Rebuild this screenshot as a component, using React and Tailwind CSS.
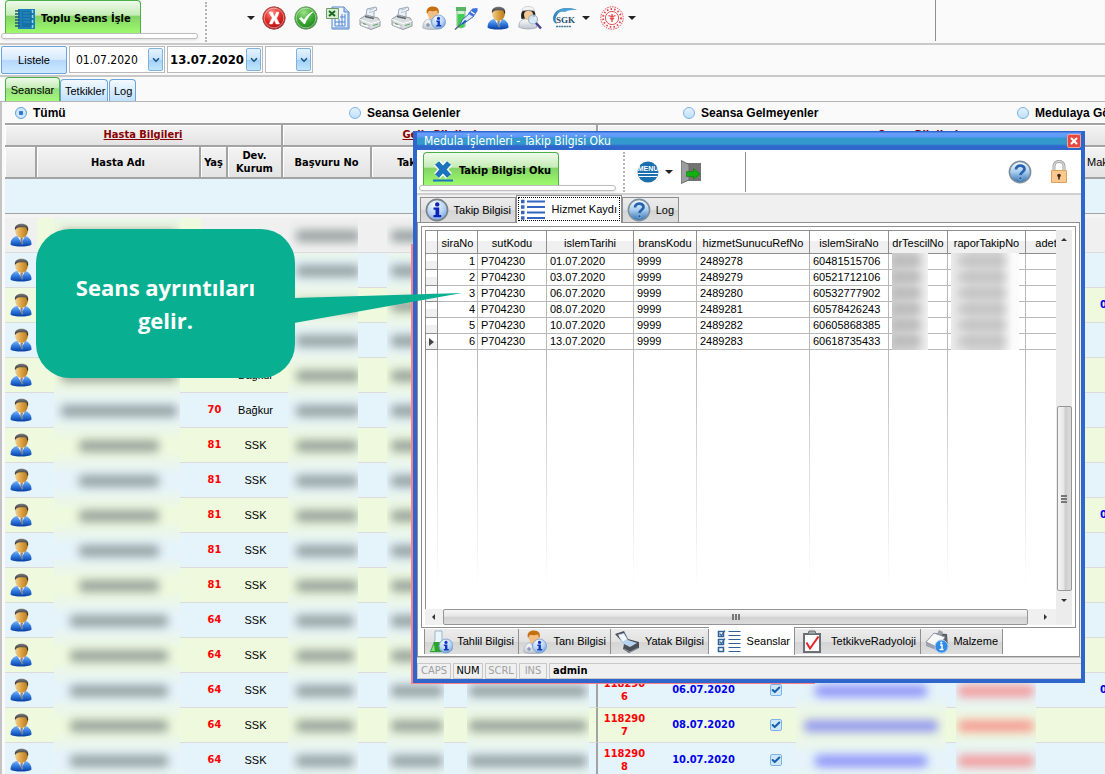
import { Check, ChevronDown, X } from 'lucide-react'
import clsx from 'clsx'

const TAHOMA = "font-['DejaVu_Sans_Condensed','DejaVu_Sans',sans-serif]"
const SANS = "font-['Liberation_Sans',Arial,sans-serif]"

const FILTERS = ['Tümü', 'Seansa Gelenler', 'Seansa Gelmeyenler', 'Medulaya Gönderilenler']

// dev: institution, name/no: widths of the masked values
const PATIENTS = [
  { name: 116, no: 64, first: true },
  { name: 116, no: 64 },
  { name: 116, no: 64, date: '0' },
  { name: 116, no: 64 },
  { age: 70, dev: 'Bağkur', name: 116, no: 64 },
  { age: 70, dev: 'Bağkur', name: 116, no: 64 },
  { age: 81, dev: 'SSK', name: 80, no: 62 },
  { age: 81, dev: 'SSK', name: 80, no: 62 },
  { age: 81, dev: 'SSK', name: 80, no: 62, date: '0' },
  { age: 81, dev: 'SSK', name: 80, no: 62 },
  { age: 81, dev: 'SSK', name: 80, no: 62 },
  { age: 64, dev: 'SSK', name: 98, no: 58 },
  { age: 64, dev: 'SSK', name: 98, no: 58 },
  { age: 64, dev: 'SSK', name: 98, no: 58, seans: '1182906', tarih: '06.07.2020', doctor: 112, date: '0' },
  { age: 64, dev: 'SSK', name: 98, no: 58, seans: '1182907', tarih: '08.07.2020', doctor: 134 },
  { age: 64, dev: 'SSK', name: 98, no: 58, seans: '1182908', tarih: '10.07.2020', doctor: 112 },
]

const SERVICE_COLUMNS = ['siraNo', 'sutKodu', 'islemTarihi', 'bransKodu', 'hizmetSunucuRefNo', 'islemSiraNo', 'drTescilNo', 'raporTakipNo', 'adet']

const SERVICES = [
  ['1', 'P704230', '01.07.2020', '9999', '2489278', '60481515706'],
  ['2', 'P704230', '03.07.2020', '9999', '2489279', '60521712106'],
  ['3', 'P704230', '06.07.2020', '9999', '2489280', '60532777902'],
  ['4', 'P704230', '08.07.2020', '9999', '2489281', '60578426243'],
  ['5', 'P704230', '10.07.2020', '9999', '2489282', '60605868385'],
  ['6', 'P704230', '13.07.2020', '9999', '2489283', '60618735433'],
]

/* ---------- icons ---------- */

function Gradients() {
  return (
    <svg width="0" height="0" className="absolute" aria-hidden="true">
      <defs>
        <linearGradient id="suit" x1="0" y1="0" x2="0" y2="1">
          <stop offset="0" stopColor="#7db4f5" />
          <stop offset=".5" stopColor="#2f78dd" />
          <stop offset=".9" stopColor="#0f48ac" />
        </linearGradient>
        <linearGradient id="skin" x1="0" y1="0" x2="1" y2="0">
          <stop offset="0" stopColor="#f0d29a" />
          <stop offset=".5" stopColor="#dca040" />
          <stop offset="1" stopColor="#b27a1e" />
        </linearGradient>
        <linearGradient id="hair" x1="0" y1="0" x2="0" y2="1">
          <stop offset="0" stopColor="#7d7d7d" />
          <stop offset="1" stopColor="#1c1c1c" />
        </linearGradient>
        <linearGradient id="coat" x1="0" y1="0" x2="0" y2="1">
          <stop offset="0" stopColor="#ffffff" />
          <stop offset="1" stopColor="#bcc3ce" />
        </linearGradient>
        <radialGradient id="redBall" cx=".4" cy=".25" r=".8">
          <stop offset="0" stopColor="#ff8d85" />
          <stop offset=".5" stopColor="#e22a26" />
          <stop offset="1" stopColor="#a90c0c" />
        </radialGradient>
        <radialGradient id="greenBall" cx=".4" cy=".25" r=".8">
          <stop offset="0" stopColor="#9fe08c" />
          <stop offset=".5" stopColor="#3fae35" />
          <stop offset="1" stopColor="#1e7d1c" />
        </radialGradient>
        <radialGradient id="infoBall" cx=".4" cy=".25" r=".8">
          <stop offset="0" stopColor="#f4faff" />
          <stop offset=".6" stopColor="#b3d2f3" />
          <stop offset="1" stopColor="#6d9fd8" />
        </radialGradient>
        <linearGradient id="helpBall" x1="0" y1="0" x2="0" y2="1">
          <stop offset="0" stopColor="#ffffff" />
          <stop offset=".5" stopColor="#a9cdec" />
          <stop offset="1" stopColor="#2f6fb2" />
        </linearGradient>
      </defs>
    </svg>
  )
}

function PersonIcon({ className = 'size-6' }) {
  return (
    <svg viewBox="0 0 24 24" className={className}>
      <path d="M1.500 21.500c0-4.500 2-7 6-8.500h9c4 1.500 6 4 6 8.500-3 2.700-18 2.700-21 0z" fill="url(#suit)" />
      <path d="M8.500 13l4 7 3.500-7-3.500-1z" fill="#fff" />
      <path d="M11.500 15.200l1-1 1.500 1-.5 1.500.8 4-1.500 1-1.500-4z" fill="#7d8496" />
      <path d="M6 6.500c0-6.500 13-6.500 13 0 0 4.500-2.700 8.500-6.500 8.500S6 11 6 6.500z" fill="url(#skin)" />
      <path d="M6 7C5.200 3 8 .7 12.500.7s7.700 2.300 6.500 7.300c-1-.8-1.300-2-1.500-3.200-2.500-.6-6-.6-9 0C7.200 5.500 6.800 6 6 7z" fill="url(#hair)" />
    </svg>
  )
}

function InfoBadge({ x = 16.500, y = 16, r = 7 }) {
  return (
    <g>
      <circle cx={x} cy={y} r={r} fill="url(#infoBall)" stroke="#7c9cc4" strokeWidth=".8" />
      <circle cx={x} cy={y - 3.600} r="1.600" fill="#1236c0" />
      <path d={`M${x - 2.200} ${y - 1.400}h3.600v4.500h1.300v1.500h-4.900v-1.500h1.200v-3h-1.200z`} fill="#1236c0" />
    </g>
  )
}

function DoctorInfoIcon() {
  return (
    <svg viewBox="0 0 24 24" className="size-6">
      <path d="M.8 22c0-5 1.500-8 6-9h7c4 1 5 4 5 9-4 2-14 2-18 0z" fill="url(#coat)" stroke="#9aa3b0" strokeWidth=".6" />
      <path d="M7 13l3.500 6 3-6-3-1.500z" fill="#9ec4ef" />
      <path d="M6 17v4M4 19h4" stroke="#6f87a8" />
      <path d="M5.500 6c0-5 10.500-5 10.500 0 0 4.500-2 8-5.200 8S5.500 10.500 5.500 6z" fill="#f0bf86" />
      <path d="M5 8C3.500 3 6.500.5 11 .5S18 3.500 16.500 8c-1-1-1-2-1.500-3.500-3 1-6 .5-8 .5-1 1-1 2-2 3z" fill="#c4700f" />
      <InfoBadge />
    </svg>
  )
}

function BallIcon({ kind }) {
  return (
    <svg viewBox="0 0 24 24" className="size-6">
      <circle cx="12" cy="12" r="11.200" fill={kind === 'ok' ? 'url(#greenBall)' : 'url(#redBall)'} stroke={kind === 'ok' ? '#6f9c6a' : '#9b4a48'} />
      <circle cx="12" cy="12" r="9.800" fill="none" stroke="#fff" strokeOpacity=".45" />
      {kind === 'ok' ? (
        <path d="M5.500 12.500l5 5.500c2-5 4.500-8.500 8-12-4 2-6.500 5-8.500 8.500l-2.500-3z" fill="#fff" stroke="#fff" strokeWidth="1" />
      ) : (
        <path d="M7 6h3.500c.5 2 1.500 3.500 2.200 4.500.6-1.500 1.300-3 1.800-4.500h2.500c-.5 2.500-1.500 4.500-2.500 6.300 1 1.700 2 3.500 3 5.700h-3.500c-.4-1.400-1-2.600-1.700-3.700-.8 1.200-1.500 2.400-2 3.700H7.500c.5-2.300 1.600-4.400 2.800-6.200C9 10 7.800 8.200 7 6z" fill="#fff" stroke="#fff" strokeWidth=".5" />
      )}
    </svg>
  )
}

function ExcelIcon() {
  return (
    <svg viewBox="0 0 24 24" className="size-6">
      <path d="M6 1h12l5 5v17H6z" fill="#eef5ff" stroke="#5484c4" />
      <path d="M22 7v15H7" fill="none" stroke="#7fa8e0" strokeWidth="1.500" />
      <path d="M9 13v7h10V8M9 16h10M13 13v7M16 8v12M14 11h5" fill="none" stroke="#4f83cf" />
      <path d="M18 1v5h5" fill="#bdd5f3" stroke="#5484c4" />
      <path d="M.5 2.500h12v10H.5z" fill="#d9ecd3" stroke="#6f9b67" />
      <path d="M3 5l6 5M9 5l-6 5" stroke="#136a20" strokeWidth="2" />
    </svg>
  )
}

function PrinterIcon() {
  return (
    <svg viewBox="0 0 24 24" className="size-6">
      <path d="M8 10l1-7 9-2 1 3-3 1v6z" fill="#eaf0f8" stroke="#9aa8ba" />
      <path d="M11 4l5-1.500M11 6.500l4-1" stroke="#b7c3d2" />
      <path d="M2 13l6-4 12 3 2 3v5l-9 3.500L2 19z" fill="#d9dce0" stroke="#9298a0" />
      <path d="M7 10.500l9 2" stroke="#5e646c" strokeWidth="1.500" />
      <path d="M2 13.500l11 4 9-2.500" fill="none" stroke="#fff" />
      <path d="M3 16.500l8 3v2.800L2.500 19.500z" fill="#f7f8f9" stroke="#a5abb2" strokeWidth=".7" />
      <path d="M5 17.500l3 1M15 19.500l5-1.500" stroke="#5cae58" strokeWidth="1.200" />
    </svg>
  )
}

function TubeIcon() {
  return (
    <svg viewBox="0 0 24 24" className="size-6">
      <path d="M3 3.500h8v17q-4 3-8 0z" fill="#cdf3d0" stroke="#8cb88e" />
      <path d="M3.500 8h7v12.500q-3.500 2.500-7 0z" fill="#3fd052" />
      <path d="M2 1h10v4H2z" fill="#58b666" />
      <path d="M1 23.500l5-4.500" stroke="#5d6470" strokeWidth="1.500" />
      <path d="M6 19l2-5 8-7 3.500 3.500-9 6.500z" fill="#dceafa" stroke="#3a6db8" />
      <path d="M14 7.500l4.500-5L23.500 2v3l-4 6z" fill="#3b73dc" />
      <path d="M17 5.500l3.500 2.500" stroke="#fff" strokeWidth="1.500" />
      <path d="M7 18l4-4 2 1-4 3z" fill="#2456b8" />
    </svg>
  )
}

function SearchPersonIcon() {
  return (
    <svg viewBox="0 0 24 24" className="size-6">
      <path d="M.8 21c0-4.500 1.500-7 6-8h7c4 1 5 4 5 8.500-4 2-14 2-18-.5z" fill="url(#coat)" stroke="#8a93a0" strokeWidth=".6" />
      <path d="M3.500 13C2.500 8 3 3 10 3s8 4 7 8z" fill="#222" />
      <path d="M6 8c0-4.500 9-4.500 9 0 0 3.500-1.500 6-4.500 6S6 11.500 6 8z" fill="#f3c894" />
      <path d="M4 5c0-3.500 3-4.500 6-4.500s6.500 1 6.500 4.500C14 4 7 4 4 5z" fill="#f5f5f7" stroke="#b4b9c2" strokeWidth=".6" />
      <circle cx="15" cy="13.500" r="4.500" fill="#d3e8fa" fillOpacity=".8" stroke="#a3b5c6" strokeWidth="1.200" />
      <path d="M18 17l5 5.500" stroke="#4a448c" strokeWidth="2.600" />
    </svg>
  )
}

function SgkIcon() {
  return (
    <svg viewBox="0 0 26 24" className="h-6 w-[26px]">
      <path d="M1 12C2 4 11-1 25 4 15 2 7 4 4 11c-1 3 0 5 1 7-3-1-4-3-4-6z" fill="#2f83bb" />
      <path d="M3 9C7 2 16 0 25 4c-5 0-9 0-12 2C9 5 6 6 3 9z" fill="#4ea0d0" />
      <text x="4" y="17" fontSize="9" fontWeight="bold" fontFamily="Liberation Serif, serif" fill="#27506f">SGK</text>
      <path d="M4 20.500h15" stroke="#4c7792" strokeWidth="1.500" strokeDasharray="2 .6" />
    </svg>
  )
}

function SealIcon() {
  return (
    <svg viewBox="0 0 24 24" className="size-6" fill="none" stroke="#e0434a">
      <circle cx="12" cy="12" r="11.200" strokeWidth="1" strokeDasharray="1.500 1" />
      <circle cx="12" cy="12" r="9" strokeWidth="1.800" strokeDasharray="1.500 2.200" />
      <circle cx="12" cy="12" r="6.600" strokeWidth=".9" />
      <path d="M12 8v8M8.500 9.500q3.500 2 7 0M10 12q2 2 4 0" strokeWidth="1.300" />
    </svg>
  )
}

function NotebookIcon() {
  return (
    <svg viewBox="0 0 22 22" className="size-[22px]">
      <path d="M4 1h17v20H4z" fill="#1b80b8" />
      <path d="M8 3h10v16H8z" fill="#1470a5" />
      <path d="M18.500 2v18" stroke="#9fd6f2" strokeDasharray="3 2" strokeWidth="1.500" />
      <path d="M1 3h5M1 6h5M1 9h5M1 12h5M1 15h5M1 18h5" stroke="#24587a" strokeWidth="1.300" />
      <path d="M9 5h7M9 8h7M9 11h7M9 14h7" stroke="#3b9bd0" strokeWidth=".8" />
    </svg>
  )
}

function CancelIcon() {
  return (
    <svg viewBox="0 0 22 22" className="size-[22px]">
      <path d="M5 3l12 13M17 3L5 16" stroke="#fff" strokeWidth="8" />
      <path d="M5 3l12 13M17 3L5 16" stroke="#1b74bd" strokeWidth="5.500" />
      <path d="M1 20.500h20" stroke="#1b74bd" strokeWidth="2" />
    </svg>
  )
}

function MenuIcon() {
  return (
    <svg viewBox="0 0 22 22" className="size-[22px]">
      <circle cx="11" cy="11" r="10.500" fill="#1c6fae" />
      <text x="11" y="10" textAnchor="middle" fontSize="7" fontWeight="bold" fontFamily="Liberation Sans, sans-serif" fill="#fff">MENÜ</text>
      <path d="M1 12.500h20M2 15.500h18" stroke="#fff" strokeWidth="1.200" />
    </svg>
  )
}

function DoorIcon() {
  return (
    <svg viewBox="0 0 20 24" className="h-6 w-5">
      <path d="M0 3h20v18H0z" fill="#737373" />
      <path d="M0 .5l8 4V20l-8 3.500z" fill="#9b9ea0" stroke="#6a6a6a" />
      <path d="M5.500 11.500h7V8.500l6.500 5.500-6.500 5.500v-3h-7z" fill="#12b00f" stroke="#0d7d0b" strokeWidth=".6" />
    </svg>
  )
}

function LockIcon() {
  return (
    <svg viewBox="0 0 18 24" className="h-6 w-[18px]">
      <path d="M4 11V6c0-6 10-6 10 0v5" fill="none" stroke="#a5a5a5" strokeWidth="3" />
      <path d="M4 11V6c0-6 10-6 10 0v5" fill="none" stroke="#e8e8e8" />
      <path d="M1.500 10.500h15v12h-15z" fill="#fbc88e" stroke="#dba262" />
      <circle cx="9" cy="15.500" r="1.800" fill="#3a2a18" />
      <path d="M8.200 16h1.600v3.500H8.200z" fill="#3a2a18" />
    </svg>
  )
}

function InfoIcon() {
  return (
    <svg viewBox="0 0 24 24" className="size-6">
      <circle cx="12" cy="12" r="10.600" fill="url(#infoBall)" stroke="#7c7f84" strokeWidth="1.600" />
      <circle cx="12.200" cy="6.400" r="2.200" fill="#0f23b8" />
      <path d="M8.500 9.500h5.700v7.500h2v2.200H8.500V17h2v-5.300h-2z" fill="#0f23b8" />
    </svg>
  )
}

function HelpIcon() {
  return (
    <svg viewBox="0 0 24 24" className="size-6">
      <circle cx="12" cy="12" r="10.600" fill="url(#helpBall)" stroke="#7c8f9f" strokeWidth="1.600" />
      <path d="M8 9.500C8 4.500 16.500 4.500 16.500 9c0 3-4 3-4 6" fill="none" stroke="#2763b0" strokeWidth="2.800" />
      <circle cx="12.400" cy="18.300" r="1.700" fill="#2763b0" stroke="#cfe0f0" strokeWidth=".5" />
    </svg>
  )
}

function ListIcon() {
  return (
    <svg viewBox="0 0 24 22" className="h-[22px] w-6">
      <path d="M6 2.500h18M6 8h18M6 13.500h18M6 19h18" stroke="#3565c0" strokeWidth="2" />
      <path d="M0 2.500h3.500M0 8h3.500M0 13.500h3.500M0 19h3.500" stroke="#3565c0" strokeWidth="3.500" />
    </svg>
  )
}

function ChecklistIcon() {
  return (
    <svg viewBox="0 0 24 24" className="size-6" fill="none" stroke="#2f6296">
      <path d="M1.500 2.500h5v5h-5zM1.500 10.500h5v5h-5zM1.500 18.500h5v4h-5z" strokeWidth="1.500" />
      <path d="M2.500 4.500l2 2L8 1.500M2.500 12.500l2 2L8 9.500" strokeWidth="1.200" />
      <path d="M11.500 2.500h12M11.500 6.500h12M11.500 10.500h12M11.500 14.500h12M11.500 18.500h12M11.500 22.500h12" strokeWidth="1.200" />
    </svg>
  )
}

function FlaskIcon() {
  return (
    <svg viewBox="0 0 24 24" className="size-6">
      <path d="M6 1h7v9l6 12H1L6 10z" fill="#e9f6fb" stroke="#9db7c6" />
      <path d="M5 12h9l5 10H1z" fill="#2ba12f" />
      <path d="M5 14l-3 7h4z" fill="#8be07e" />
      <InfoBadge x={17} />
    </svg>
  )
}

function BedIcon() {
  return (
    <svg viewBox="0 0 24 22" className="h-[22px] w-6">
      <path d="M0 3l9-3 4 8 11 3v6l-10 5-6-4 1-5z" fill="#4b4f58" />
      <path d="M3 3.500L9 2l4 7 9 3-7 4-8-4z" fill="#b7d3ee" />
      <path d="M3.500 4.500L8.500 3l3.500 5-4 2.500z" fill="#f5faff" />
      <path d="M9 18l6 3 8-4" fill="none" stroke="#9297a0" />
    </svg>
  )
}

function ClipboardIcon() {
  return (
    <svg viewBox="0 0 20 24" className="h-6 w-5">
      <path d="M1 3h18v20H1z" fill="#6b7077" />
      <path d="M3 5h14v16H3z" fill="#fdfdfd" />
      <path d="M6 4l1-3h6l1 3z" fill="#a8adb3" stroke="#686d73" />
      <path d="M4.500 12.500l3.500 6 8.500-12" fill="none" stroke="#e32626" strokeWidth="2" />
    </svg>
  )
}

function SuppliesIcon() {
  return (
    <svg viewBox="0 0 24 24" className="size-6">
      <path d="M9 3l13 1 1 13-12 4z" fill="#5b6068" />
      <path d="M14 0l4 2-2 4-4-2z" fill="#9aa0a8" />
      <path d="M9 3l11 4-6 11L1 12z" fill="#f7f8fa" stroke="#8f959d" />
      <path d="M1 12l13 6v3L1 16z" fill="#9aa3ae" />
      <circle cx="16.500" cy="16.500" r="6.500" fill="#2f8be6" stroke="#a9cdf2" />
      <path d="M15 15h2v4.500M14.500 19.500h4" stroke="#fff" strokeWidth="1.500" fill="none" />
      <circle cx="16.300" cy="12.700" r="1.100" fill="#fff" />
    </svg>
  )
}

/* ---------- small parts ---------- */

function Caret() {
  return (
    <svg viewBox="0 0 8 4" className="h-1 w-2 shrink-0">
      <path d="M0 0h8L4 4z" fill="#222" />
    </svg>
  )
}

function DottedBar() {
  return <div className="h-10 w-0 shrink-0 border-l-2 border-dotted border-[#b4b4b4]" />
}

function MainButton({ icon, children }) {
  return (
    <div className="w-[200px] shrink-0">
      <button
        className={clsx(
          'ml-1 flex h-[33px] w-[136px] items-center gap-[5px] rounded-t-sm border border-b-0 border-[#4bb04b] bg-[linear-gradient(#f0faec,#c4ecb4_45%,#83d266_46%,#9dfb6c)] pt-1 pl-2 text-[11px] font-bold whitespace-nowrap',
          TAHOMA,
        )}
      >
        {icon}
        {children}
      </button>
      <div className="h-[6px] w-[197px] rounded-full border border-[#bdbdbd] bg-white shadow-sm" />
    </div>
  )
}

function ComboBox({ label, value, bold, className }) {
  return (
    <div className={clsx('flex h-[27px] items-center border border-[#b9b9b9] bg-white pr-px', className)}>
      <input
        aria-label={label}
        defaultValue={value}
        className={clsx('min-w-0 flex-1 outline-none', TAHOMA, bold ? 'pl-0.5 text-[13px] font-bold' : 'pl-1.5 text-[12px]')}
      />
      <button
        aria-label={label}
        className="flex h-[23px] w-[15px] shrink-0 items-center justify-center rounded-xs border border-[#7fb2dd] bg-[linear-gradient(#e6f3fe,#c5e2fb_50%,#a0d0f8_51%,#c3e6ff)]"
      >
        <ChevronDown className="size-2.5 stroke-[#1d5583] stroke-[4]" />
      </button>
    </div>
  )
}

function Smudge({ tone, width, color = 'bg-[#7e8a88]', className, align = 'mx-auto' }) {
  return (
    <div
      className={clsx(
        '-mb-px flex h-[35px] items-center overflow-hidden',
        tone === 'blue' && 'bg-[linear-gradient(#eaf6ec,#e5f3fa_35%,#e5f3fa_65%,#eaf6ec)]',
        tone === 'green' && 'bg-[linear-gradient(#eaf6ec,#eff9de_35%,#eff9de_65%,#eaf6ec)]',
        className,
      )}
    >
      <div className={clsx('h-3 shrink-0 rounded-sm opacity-75 blur-[5px]', color, align)} style={{ width }} />
    </div>
  )
}

/* ---------- main screen ---------- */

function Toolbar() {
  return (
    <div className="flex h-[43px] shrink-0 items-start">
      <div className="flex h-[41px] w-[936px] shrink-0 border-r border-[#8f8f8f] pl-px">
        <MainButton icon={<NotebookIcon />}>Toplu Seans İşle</MainButton>
        <div className="ml-1 pt-0.5">
          <DottedBar />
        </div>
        <div className="ml-10 flex h-9 items-center gap-2">
          <button className="-mr-px" aria-label="Seçenekler"><Caret /></button>
          <button aria-label="İptal"><BallIcon kind="cancel" /></button>
          <button aria-label="Onayla"><BallIcon kind="ok" /></button>
          <button aria-label="Excel"><ExcelIcon /></button>
          <button aria-label="Yazdır"><PrinterIcon /></button>
          <button aria-label="Liste yazdır"><PrinterIcon /></button>
          <button aria-label="Hasta bilgisi"><DoctorInfoIcon /></button>
          <button aria-label="Tetkik"><TubeIcon /></button>
          <button aria-label="Hasta"><PersonIcon /></button>
          <button aria-label="Hasta ara"><SearchPersonIcon /></button>
          <button aria-label="SGK" className="ml-0.5 flex items-center gap-1"><SgkIcon /><Caret /></button>
          <button aria-label="Bakanlık" className="ml-0.5 flex items-center gap-1"><SealIcon /><Caret /></button>
        </div>
      </div>
    </div>
  )
}

function QueryBar() {
  return (
    <div className="flex h-[34px] shrink-0 items-start gap-0.5 border-y-2 border-[#c9c9c9] pt-px pl-px">
      <button className={clsx('h-7 w-[66px] rounded-xs border border-[#6ba4dc] bg-[linear-gradient(#f3f9ff,#d6eafd_48%,#b4d8fb_50%,#cde9ff)] text-[11px]', SANS)}>
        Listele
      </button>
      <ComboBox label="Başlangıç" value="01.07.2020" className="w-24" />
      <ComboBox label="Bitiş" value="13.07.2020" bold className="w-24" />
      <ComboBox label="Seçim" value="" className="w-12" />
    </div>
  )
}

function ScreenTabs() {
  const tab = 'rounded-t-sm border border-b-0 px-1 pt-0.5 text-[11px]'
  return (
    <div className={clsx('flex h-[25px] shrink-0 items-end border-b border-[#b5b5b5] pl-[5px]', SANS)} role="tablist">
      <button role="tab" className={clsx(tab, 'h-6 w-[55px] border-[#4bb04b] bg-[linear-gradient(#eefae8,#c4ecb4_45%,#97dc80_46%,#a5f97b)]')}>Seanslar</button>
      <button role="tab" className={clsx(tab, 'h-[22px] w-12 border-[#6ba4dc] bg-linear-to-b from-[#f3f9ff] to-[#bfe1fb] px-0.5 whitespace-nowrap')}>Tetkikler</button>
      <button role="tab" className={clsx(tab, 'ml-px h-[22px] w-[27px] border-[#6ba4dc] bg-linear-to-b from-[#f3f9ff] to-[#bfe1fb]')}>Log</button>
    </div>
  )
}

function FilterRow() {
  return (
    <div className={clsx('grid h-[21px] shrink-0 grid-cols-[repeat(4,334px)] items-center pl-[13px] text-[12px] font-bold', SANS)}>
      {FILTERS.map((name, i) => (
        <label key={name} className="flex items-center gap-1.5">
          <input
            type="radio"
            name="filter"
            defaultChecked={i === 0}
            className="size-3 appearance-none rounded-full border border-[#7db3e6] bg-linear-to-b from-[#e4f1fd] to-[#bfe0fb] checked:border-[#5c9fe0] checked:bg-[radial-gradient(#2d77cc_28%,#cfe7fc_36%)]"
          />
          {name}
        </label>
      ))}
    </div>
  )
}

function PatientTable() {
  const head = 'border-r-2 border-b-2 border-[#a3a3a3] bg-linear-to-b from-[#f4f4f4] to-[#e3e3e3] p-0 shadow-[inset_1px_1px_0_#fff]'
  const group = clsx(head, 'h-[22px] text-[11px] text-[#8b0000] underline')
  return (
    <table className={clsx('ml-[5px] w-[1235px] table-fixed border-separate border-spacing-0 border-t-2 border-[#a3a3a3] text-center text-[11px]', TAHOMA)}>
      <colgroup>
        <col className="w-8" />
        <col className="w-[164px]" />
        <col className="w-[27px]" />
        <col className="w-[55px]" />
        <col className="w-[89px]" />
        <col className="w-[92px]" />
        <col className="w-[134px]" />
        <col className="w-[53px]" />
        <col className="w-[105px]" />
        <col className="w-10" />
        <col className="w-[150px]" />
        <col className="w-[100px]" />
        <col className="w-[38px]" />
        <col />
      </colgroup>
      <thead>
        <tr>
          <th colSpan={4} className={group}>Hasta Bilgileri</th>
          <th colSpan={3} className={group}>Geliş Bilgileri</th>
          <th colSpan={7} className={group}>Seans Bilgileri</th>
        </tr>
        <tr className="h-8 leading-[13px]">
          <th className={head} />
          <th className={head}>Hasta Adı</th>
          <th className={head}>Yaş</th>
          <th className={head}>Dev. Kurum</th>
          <th className={head}>Başvuru No</th>
          <th className={clsx(head, 'pl-2')}>Takip No</th>
          <th className={head} />
          <th className={head} />
          <th className={head} />
          <th className={head} />
          <th className={head} />
          <th className={head} />
          <th className={head} />
          <th className={clsx(head, SANS, 'pl-[3px] text-left font-normal')}>Makbuz</th>
        </tr>
      </thead>
      <tbody>
        <tr className="h-[35px] bg-[#e5f3fa]">
          <td colSpan={14} className="border-b border-[#a3a3a3] p-0" />
        </tr>
        <tr className="h-1 bg-[#f4f4f4]">
          <td colSpan={14} className="p-0" />
        </tr>
        {PATIENTS.map((p, i) => {
          const tone = i === 0 ? 'gray' : i % 2 ? 'blue' : 'green'
          const cell = 'h-[35px] border-b border-[#dcdcdc] p-0'
          return (
            <tr key={i} className={clsx(tone === 'gray' && 'bg-[#f0f0f0]', tone === 'blue' && 'bg-[#e5f3fa]', tone === 'green' && 'bg-[#eff9de]')}>
              <td className={cell}><PersonIcon className="ml-1 size-6" /></td>
              <td className={clsx(cell, p.first && 'bg-[#eff9de]')}><Smudge tone={p.first ? 'green' : tone} width={p.name} className="ml-[17px] w-[126px] pl-1" /></td>
              <td className={clsx(cell, 'font-bold text-[#f00]')}>{p.age}</td>
              <td className={clsx(cell, SANS)}>{p.dev}</td>
              <td className={cell}><Smudge tone={tone} width={p.no} align="ml-2" className="ml-[5px] w-[70px]" /></td>
              <td className={cell}><Smudge tone={tone} width={52} align="ml-1" className="ml-[15px] w-[57px]" /></td>
              <td className={clsx(cell, 'border-r-2 border-r-[#a3a3a3]')}><Smudge tone={tone} width={118} className="ml-[3px] w-[122px]" /></td>
              <td className={clsx(cell, 'px-1 leading-[13px] font-bold break-all text-[#f00]')}>{p.seans}</td>
              <td className={clsx(cell, 'font-bold text-[#0000f0]')}>{p.tarih}</td>
              <td className={cell}>
                {p.tarih && (
                  <label className="mx-auto grid size-3 place-items-center">
                    <input type="checkbox" defaultChecked aria-label={p.tarih} className="col-start-1 row-start-1 size-3 appearance-none rounded-xs border border-[#7db3e6] bg-[#cfe7fc]" />
                    <Check className="pointer-events-none col-start-1 row-start-1 size-2.5 stroke-[#1862ad] stroke-[5]" />
                  </label>
                )}
              </td>
              <td className={cell}>{p.doctor && <Smudge tone={tone} width={p.doctor} color="bg-[#7479f8]" />}</td>
              <td className={cell}>{p.doctor && <Smudge tone={tone} width={76} color="bg-[#f7807c]" className="ml-[10px] w-20" />}</td>
              <td className={cell} />
              <td className={clsx(cell, 'pl-4 text-left font-bold text-[#0000f0]')}>{p.date}</td>
            </tr>
          )
        })}
      </tbody>
    </table>
  )
}

/* ---------- "Takip Bilgisi Oku" window ---------- */

function WindowToolbar() {
  return (
    <div className="flex h-[45px] shrink-0 items-start border-b-2 border-[#d0d0d0] bg-white pt-0.5 pl-0.5">
      <MainButton icon={<CancelIcon />}>Takip Bilgisi Oku</MainButton>
      <div className="ml-1"><DottedBar /></div>
      <div className="ml-3 flex h-10 w-[109px] items-center gap-2 border-r border-[#8f8f8f]">
        <button aria-label="Menü" className="flex items-center gap-1.5"><MenuIcon /><Caret /></button>
        <button aria-label="Çıkış"><DoorIcon /></button>
      </div>
      <div className="ml-auto flex h-10 items-center gap-[18px] pr-[13px]">
        <button aria-label="Yardım"><HelpIcon /></button>
        <button aria-label="Kilitle"><LockIcon /></button>
      </div>
    </div>
  )
}

function WindowTab({ icon, active, bottom, className, children }) {
  return (
    <button
      role="tab"
      aria-selected={Boolean(active)}
      className={clsx(
        'flex items-center justify-between border-[#8f8f8f] pr-1 pl-1 whitespace-nowrap',
        bottom ? 'border-r' : 'border border-b-0',
        active ? 'bg-white' : 'bg-[linear-gradient(#ececec,#e2e2e2_50%,#d4d4d4_51%,#dedede)]',
        className,
      )}
    >
      {icon}
      {children}
    </button>
  )
}

function ServiceTable() {
  const head = 'h-[23px] border-r border-b border-[#8f8f8f] bg-[linear-gradient(#fff_45%,#f0f0f0_46%)] p-0 pt-0.5 font-normal'
  const cell = 'h-4 border-r border-b border-[#b9b9b9] py-0 pr-0.5 pl-[3px] leading-[15px]'
  const fade = 'h-[238px] bg-[linear-gradient(#b9b9b9,#fff)] bg-[length:1px_100%] bg-right bg-no-repeat p-0'
  return (
    <table className="w-[641px] shrink-0 table-fixed border-separate border-spacing-0 text-left">
      <colgroup>
        <col className="w-3" />
        <col className="w-10" />
        <col className="w-[69px]" />
        <col className="w-[87px]" />
        <col className="w-[63px]" />
        <col className="w-[113px]" />
        <col className="w-[79px]" />
        <col className="w-[59px]" />
        <col className="w-[78px]" />
        <col />
      </colgroup>
      <thead>
        <tr>
          <th className={head} />
          {SERVICE_COLUMNS.map((c) => (
            <th key={c} className={clsx(head, 'text-center')}>{c}</th>
          ))}
        </tr>
      </thead>
      <tbody>
        {SERVICES.map((row, i) => (
          <tr key={row[0]}>
            <td className="border-r border-b border-[#8f8f8f] bg-[linear-gradient(#fff_45%,#f0f0f0_46%)] p-0">
              {i === 5 && (
                <svg viewBox="0 0 5 8" className="mx-auto h-2 w-[5px]">
                  <path d="M0 0l5 4-5 4z" fill="#444" />
                </svg>
              )}
            </td>
            {row.map((v, n) => (
              <td key={n} className={clsx(cell, n === 0 && 'text-right')}>{v}</td>
            ))}
            <td className={clsx(cell, 'relative')}>
              <div className="-my-px h-[17px] w-9 overflow-hidden bg-[linear-gradient(to_right,#cfcfcf,#d4d4d4_60%,#f2f2f2)]">
                <div className="mt-1 h-2 w-7 bg-[#b4b4b4] blur-[4px]" />
              </div>
            </td>
            <td className={clsx(cell, 'relative')}>
              <div className="-my-px h-[17px] w-[68px] overflow-hidden bg-[linear-gradient(to_right,#ececec,#d6d6d6_30%,#d6d6d6_70%,#fbfbfb_90%)]">
                <div className="mt-1 ml-2 h-2 w-[46px] bg-[#c0c0c0] blur-[4px]" />
              </div>
            </td>
            <td className={clsx(cell, 'border-r-0')} />
          </tr>
        ))}
        <tr>
          {['mark', ...SERVICE_COLUMNS].map((c) => (
            <td key={c} className={clsx(c !== 'adet' && fade)} />
          ))}
        </tr>
      </tbody>
    </table>
  )
}

function ScrollArrow({ d }) {
  return (
    <svg viewBox="0 0 8 8" className="size-2 shrink-0">
      <path d={d} fill="#333" />
    </svg>
  )
}

function ServicePanel() {
  return (
    <div className="flex min-h-0 flex-1 flex-col border border-[#8f8f8f] bg-white px-[3px] pt-[3px] pb-px">
      <div className="flex min-h-0 flex-1 border border-[#8f8f8f] bg-white pt-[3px] pr-[3px] pb-0.5 pl-[3px]">
        <div className="flex min-w-0 flex-1 flex-col">
          <div className="min-h-0 flex-1 overflow-hidden border-t border-l border-[#8f8f8f]">
            <ServiceTable />
          </div>
          <div className="flex h-4 items-center bg-[#f0f0f0]">
            <div className="flex w-[18px] justify-center"><ScrollArrow d="M5 1v6L2 4z" /></div>
            <div className="flex h-4 flex-1 items-center justify-center gap-px rounded-xs border border-[#969696] bg-[linear-gradient(#f5f5f5,#e6e6e6_45%,#d2d2d2_50%,#dcdcdc)]">
              <span className="h-1.5 w-0.5 bg-[#777]" />
              <span className="h-1.5 w-0.5 bg-[#777]" />
              <span className="h-1.5 w-0.5 bg-[#777]" />
            </div>
            <div className="flex w-7 justify-center pl-2"><ScrollArrow d="M2 1v6l3-3z" /></div>
          </div>
        </div>
        <div className="flex w-4 shrink-0 flex-col items-center bg-[#ececec] pb-[14px]">
          <div className="flex h-[17px] items-center"><ScrollArrow d="M1 6h6L4 3z" /></div>
          <div className="flex-1" />
          <div className="flex h-[185px] w-[15px] flex-col items-center justify-center gap-px rounded-xs border border-[#969696] bg-[linear-gradient(to_right,#f5f5f5,#e6e6e6_45%,#cdcdcd_55%,#dcdcdc)]">
            <span className="h-0.5 w-1.5 bg-[#777]" />
            <span className="h-0.5 w-1.5 bg-[#777]" />
            <span className="h-0.5 w-1.5 bg-[#777]" />
          </div>
          <div className="flex h-5 items-center"><ScrollArrow d="M1 2h6L4 5z" /></div>
        </div>
      </div>
      <div className="flex h-[27px] shrink-0 items-start pl-[3px]" role="tablist">
        <WindowTab bottom icon={<FlaskIcon />} className="mt-px h-[25px] w-[95px] border-l">Tahlil Bilgisi</WindowTab>
        <WindowTab bottom icon={<DoctorInfoIcon />} className="mt-px h-[25px] w-[92px]">Tanı Bilgisi</WindowTab>
        <WindowTab bottom icon={<BedIcon />} className="mt-px h-[25px] w-[98px]">Yatak Bilgisi</WindowTab>
        <WindowTab bottom active icon={<ChecklistIcon />} className="relative -mt-px h-7 w-[86px] pl-2">Seanslar</WindowTab>
        <WindowTab bottom icon={<ClipboardIcon />} className="mt-px h-[25px] w-[126px] pl-[7px]">TetkikveRadyoloji</WindowTab>
        <WindowTab bottom icon={<SuppliesIcon />} className="mt-px h-[25px] w-[82px]">Malzeme</WindowTab>
      </div>
    </div>
  )
}

function StatusBar() {
  const box = 'flex h-4 items-center justify-center border border-[#c8c8c8]'
  return (
    <div className={clsx('flex h-[22px] shrink-0 items-end gap-0.5 border-t border-[#c8c8c8] text-[11px]', TAHOMA)}>
      <span className={clsx(box, 'w-[34px] text-[#a0a0a0]')}>CAPS</span>
      <span className={clsx(box, 'w-[30px]')}>NUM</span>
      <span className={clsx(box, 'w-[32px] text-[#a0a0a0]')}>SCRL</span>
      <span className={clsx(box, 'w-[28px] text-[#a0a0a0]')}>INS</span>
      <span className={clsx(box, 'flex-1 justify-start border-r-0 pl-[3px] font-bold')}>admin</span>
    </div>
  )
}

function TrackingWindow() {
  return (
    <section className="absolute top-[131px] left-[413px] flex h-[552px] w-[672px] flex-col border-x-4 border-b-4 border-[#2f66cc] bg-[#f0f0f0]">
      <span className="absolute top-[113px] -bottom-[5px] -left-1.5 w-0.5 bg-[#fb8087]" />
      <span className="absolute -bottom-[5px] -left-1 h-px w-[402px] bg-[#fb8087]" />
      <header className="flex h-[19px] shrink-0 items-center justify-between bg-[linear-gradient(#2f66cc_1px,#6aa0ff_2px,#5d97f8_6px,#3399cc_7px,#3399cc_13px,#2f66cc_15px)] pl-[7px] text-[12px] leading-[18px] text-white">
        <h1 className={TAHOMA}>Medula İşlemleri - Takip Bilgisi Oku</h1>
        <button aria-label="Kapat" className="flex size-3.5 items-center justify-center rounded-xs border border-[#f3a49c] bg-[#e8483f]">
          <X className="size-2.5 stroke-[5]" />
        </button>
      </header>
      <WindowToolbar />
      <div className={clsx('flex min-h-0 flex-1 flex-col pr-px text-[11px]', SANS)}>
        <div className="flex h-[27px] shrink-0 items-end pl-[3px]" role="tablist">
          <WindowTab icon={<InfoIcon />} className="h-[25px] w-24">Takip Bilgisi</WindowTab>
          <WindowTab active icon={<ListIcon />} className="relative -mb-px h-7 w-[106px] outline-1 -outline-offset-3 outline-dotted outline-black">Hizmet Kaydı</WindowTab>
          <WindowTab icon={<HelpIcon />} className="h-[25px] w-[57px]">Log</WindowTab>
        </div>
        <ServicePanel />
      </div>
      <StatusBar />
    </section>
  )
}

function Callout() {
  return (
    <aside className="absolute top-[229px] left-[36px] flex h-[149px] w-[259px] items-center justify-center rounded-[34px] bg-[#08af91] px-8 text-center">
      <p className="font-['Open_Sans','Noto_Sans',sans-serif] text-[22px] leading-[33px] font-bold text-white">Seans ayrıntıları gelir.</p>
      <svg viewBox="0 0 168 30" className="absolute top-[64px] left-[258px] h-[30px] w-[168px]">
        <path d="M0 5L168 0 0 30z" fill="#08af91" />
      </svg>
    </aside>
  )
}

export default function App() {
  return (
    <main className="relative flex h-screen flex-col overflow-hidden bg-[#fafafa] text-black">
      <Gradients />
      <Toolbar />
      <QueryBar />
      <ScreenTabs />
      <div className="min-h-0 flex-1 overflow-hidden border-l-2 border-[#c4c4c4]">
        <FilterRow />
        <div className="-ml-0.5">
          <PatientTable />
        </div>
      </div>
      <TrackingWindow />
      <Callout />
    </main>
  )
}
